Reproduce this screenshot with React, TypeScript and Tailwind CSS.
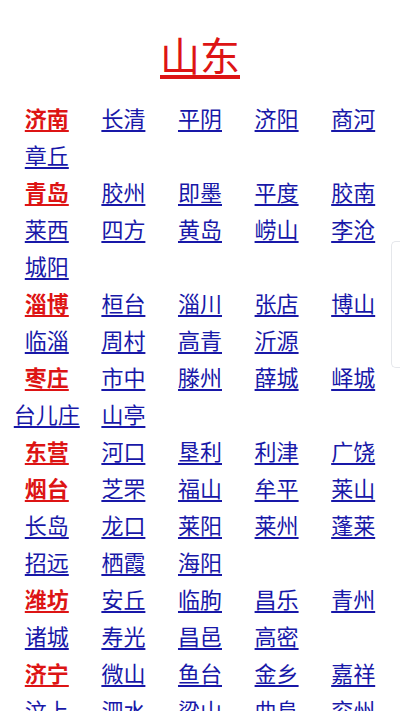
import React from 'react'

type Area = { city: string; towns: string[] }

const areas: Area[] = [
  { city: '济南', towns: ['长清', '平阴', '济阳', '商河', '章丘'] },
  { city: '青岛', towns: ['胶州', '即墨', '平度', '胶南', '莱西', '四方', '黄岛', '崂山', '李沧', '城阳'] },
  { city: '淄博', towns: ['桓台', '淄川', '张店', '博山', '临淄', '周村', '高青', '沂源'] },
  { city: '枣庄', towns: ['市中', '滕州', '薛城', '峄城', '台儿庄', '山亭'] },
  { city: '东营', towns: ['河口', '垦利', '利津', '广饶'] },
  { city: '烟台', towns: ['芝罘', '福山', '牟平', '莱山', '长岛', '龙口', '莱阳', '莱州', '蓬莱', '招远', '栖霞', '海阳'] },
  { city: '潍坊', towns: ['安丘', '临朐', '昌乐', '青州', '诸城', '寿光', '昌邑', '高密'] },
  { city: '济宁', towns: ['微山', '鱼台', '金乡', '嘉祥', '汶上', '泗水', '梁山', '曲阜', '兖州', '邹城'] },
  { city: '泰安', towns: ['新泰', '肥城', '宁阳', '东平'] },
]

const font = { fontFamily: '"Noto Sans CJK SC", "Noto Sans", sans-serif' }

function AreaCells({ area }: { area: Area }) {
  const cells = [area.city, ...area.towns]
  const pad = (5 - (cells.length % 5)) % 5
  return (
    <>
      {cells.map((name, i) => (
        <div key={name + i} className="h-[37px] flex items-center justify-center">
          <a
            href="#"
            className={
              i === 0
                ? 'text-[22px] leading-none font-bold text-[#dd1414] underline underline-offset-[3px]'
                : 'text-[22px] leading-none text-[#1818a8] underline underline-offset-[3px]'
            }
          >
            {name}
          </a>
        </div>
      ))}
      {Array.from({ length: pad }).map((_, i) => (
        <div key={'pad' + i} className="h-[37px]" />
      ))}
    </>
  )
}

export default function App() {
  return (
    <div className="relative min-h-screen bg-white" style={font}>
      <div className="pt-[32px] h-[76px] text-center">
        <a href="#" className="text-[40px] leading-[44px] text-[#dd1414] underline underline-offset-[4px]">
          山东
        </a>
      </div>
      <div className="mt-[22px] mx-auto w-[383px] grid grid-cols-5">
        {areas.map((a) => (
          <AreaCells key={a.city} area={a} />
        ))}
      </div>
      <div className="absolute right-0 top-[241px] w-[9px] h-[127px] bg-white border border-r-0 border-gray-200 rounded-l-[5px]" />
    </div>
  )
}
